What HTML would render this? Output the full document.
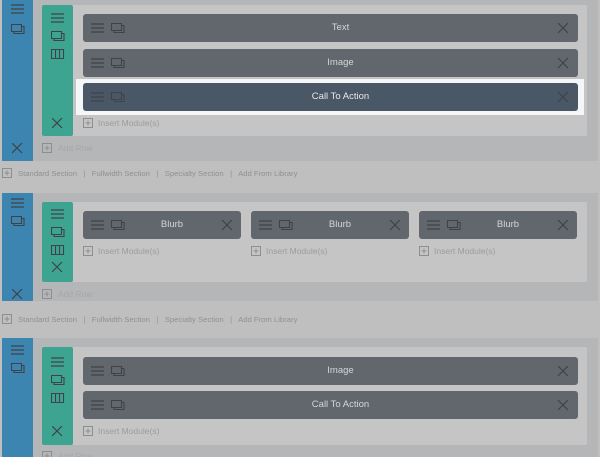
<!DOCTYPE html><html style="overflow:hidden;width:600px;height:457px"><head><style>
*{margin:0;padding:0;box-sizing:border-box}
body{width:600px;height:457px;background:#bfbfbf;position:relative;overflow:hidden;font-family:"Liberation Sans",sans-serif}
.a{position:absolute}
.sec{background:#b4b6b8}
.blue{background:#3c85b0}
.green{background:#3ea492;border-radius:2px}
.row{background:#c5c5c5;border-radius:2px}
.mod{background:#62676d;border-radius:3px;color:#d4d6d8;font-size:9.5px;text-align:center;line-height:28px;padding-left:20px}
.dark{background:#4a5766;color:#e6e8ea}
.ins{font-size:8.5px;color:#9a9c9e;line-height:11px}
.lnk{font-size:7.7px;color:#8f9193;line-height:11px;white-space:nowrap}
svg{position:absolute}
</style></head><body>
<svg width="0" height="0" style="position:absolute"><defs>
<g id="h"><path d="M0 1H13M0 5H13M0 9H13" stroke="#3f4347" stroke-width="1.2" fill="none"/></g>
<g id="d"><path d="M0.5 0.5H10.5V7.5H0.5Z M3 7.5V9.5H13V2.5H10.5" stroke="#3f4347" stroke-width="1.1" fill="none"/></g>
<g id="c"><path d="M0.5 0.5H12.5V9.5H0.5Z M4.5 0.5V9.5M8.5 0.5V9.5" stroke="#3f4347" stroke-width="1.1" fill="none"/></g>
<g id="x"><path d="M0 0L10 10M10 0L0 10" stroke="#3f4347" stroke-width="1.2" fill="none"/></g>
<g id="p"><rect x="0.5" y="0.5" width="9" height="9" stroke="#8c8e90" fill="none"/><path d="M5 2.5V7.5M2.5 5H7.5" stroke="#8c8e90"/></g>
</defs></svg>

<div class="a sec" style="left:2px;top:0;width:596px;height:161px"></div>
<div class="a blue" style="left:2px;top:0;width:31px;height:161px"></div>
<svg style="left:11px;top:4px" width="14" height="40"><use href="#h"/><use href="#d" y="20"/></svg>
<svg style="left:12px;top:143px" width="11" height="11"><use href="#x"/></svg>
<div class="a row" style="left:42px;top:5px;width:545px;height:131px"></div>
<div class="a green" style="left:42px;top:5px;width:31px;height:131px"></div>
<svg style="left:51px;top:13px" width="14" height="50"><use href="#h"/><use href="#d" y="18"/><use href="#c" y="36"/></svg>
<svg style="left:52px;top:118px" width="11" height="11"><use href="#x"/></svg>
<div class="a mod" style="left:83px;top:14px;width:495px;height:28px">Text</div>
<div class="a mod" style="left:83px;top:49px;width:495px;height:28px">Image</div>
<div class="a" style="left:76px;top:79px;width:508px;height:36px;background:#f4f6f7"></div>
<div class="a mod dark" style="left:83px;top:83px;width:495px;height:28px">Call To Action</div>
<svg style="left:91px;top:23px" width="490" height="85"><use href="#h"/><use href="#d" x="20"/><use href="#x" x="467"/>
<use href="#h" y="35"/><use href="#d" x="20" y="35"/><use href="#x" x="467" y="35"/>
<use href="#h" y="69"/><use href="#d" x="20" y="69"/><use href="#x" x="467" y="69"/></svg>
<svg style="left:83px;top:118px" width="10" height="10"><use href="#p"/></svg>
<div class="a ins" style="left:98px;top:118px">Insert Module(s)</div>
<svg style="left:42px;top:143px" width="10" height="10"><use href="#p"/></svg>
<div class="a ins" style="left:58px;top:143px;color:#a5a7a9">Add Row</div>
<svg style="left:2px;top:168px" width="10" height="10"><use href="#p"/></svg>
<div class="a lnk" style="left:18px;top:168px">Standard Section &nbsp;&nbsp;|&nbsp;&nbsp; Fullwidth Section &nbsp;&nbsp;|&nbsp;&nbsp; Specialty Section &nbsp;&nbsp;|&nbsp;&nbsp; Add From Library</div>

<div class="a sec" style="left:2px;top:193px;width:596px;height:108px"></div>
<div class="a blue" style="left:2px;top:193px;width:31px;height:108px"></div>
<svg style="left:11px;top:198px" width="14" height="40"><use href="#h"/><use href="#d" y="18"/></svg>
<svg style="left:12px;top:289px" width="11" height="11"><use href="#x"/></svg>
<div class="a row" style="left:42px;top:202px;width:545px;height:80px"></div>
<div class="a green" style="left:42px;top:202px;width:31px;height:80px"></div>
<svg style="left:51px;top:209px" width="14" height="66"><use href="#h"/><use href="#d" y="18"/><use href="#c" y="36"/><use href="#x" x="1" y="53"/></svg>
<div class="a mod" style="left:83px;top:211px;width:158px;height:28px">Blurb</div>
<div class="a mod" style="left:251px;top:211px;width:158px;height:28px">Blurb</div>
<div class="a mod" style="left:419px;top:211px;width:158px;height:28px">Blurb</div>
<svg style="left:91px;top:220px" width="490" height="12"><use href="#h"/><use href="#d" x="20"/><use href="#x" x="131"/>
<use href="#h" x="168"/><use href="#d" x="188"/><use href="#x" x="299"/>
<use href="#h" x="336"/><use href="#d" x="356"/><use href="#x" x="467"/></svg>
<svg style="left:83px;top:246px" width="10" height="10"><use href="#p"/></svg><div class="a ins" style="left:98px;top:246px">Insert Module(s)</div>
<svg style="left:251px;top:246px" width="10" height="10"><use href="#p"/></svg><div class="a ins" style="left:266px;top:246px">Insert Module(s)</div>
<svg style="left:419px;top:246px" width="10" height="10"><use href="#p"/></svg><div class="a ins" style="left:434px;top:246px">Insert Module(s)</div>
<svg style="left:42px;top:289px" width="10" height="10"><use href="#p"/></svg>
<div class="a ins" style="left:58px;top:289px;color:#a5a7a9">Add Row</div>
<svg style="left:2px;top:314px" width="10" height="10"><use href="#p"/></svg>
<div class="a lnk" style="left:18px;top:314px">Standard Section &nbsp;&nbsp;|&nbsp;&nbsp; Fullwidth Section &nbsp;&nbsp;|&nbsp;&nbsp; Specialty Section &nbsp;&nbsp;|&nbsp;&nbsp; Add From Library</div>

<div class="a sec" style="left:2px;top:338px;width:596px;height:119px"></div>
<div class="a blue" style="left:2px;top:338px;width:31px;height:119px"></div>
<svg style="left:11px;top:345px" width="14" height="40"><use href="#h"/><use href="#d" y="18"/></svg>
<div class="a row" style="left:42px;top:347px;width:545px;height:98px"></div>
<div class="a green" style="left:42px;top:347px;width:31px;height:98px"></div>
<svg style="left:51px;top:357px" width="14" height="50"><use href="#h"/><use href="#d" y="18"/><use href="#c" y="36"/></svg>
<svg style="left:52px;top:426px" width="11" height="11"><use href="#x"/></svg>
<div class="a mod" style="left:83px;top:357px;width:495px;height:28px">Image</div>
<div class="a mod" style="left:83px;top:391px;width:495px;height:28px">Call To Action</div>
<svg style="left:91px;top:366px" width="490" height="50"><use href="#h"/><use href="#d" x="20"/><use href="#x" x="467"/>
<use href="#h" y="34"/><use href="#d" x="20" y="34"/><use href="#x" x="467" y="34"/></svg>
<svg style="left:83px;top:426px" width="10" height="10"><use href="#p"/></svg>
<div class="a ins" style="left:98px;top:426px">Insert Module(s)</div>
<svg style="left:42px;top:451px" width="10" height="6"><use href="#p"/></svg>
<div class="a ins" style="left:58px;top:451px;color:#a5a7a9;height:6px;overflow:hidden">Add Row</div>
</body></html>
